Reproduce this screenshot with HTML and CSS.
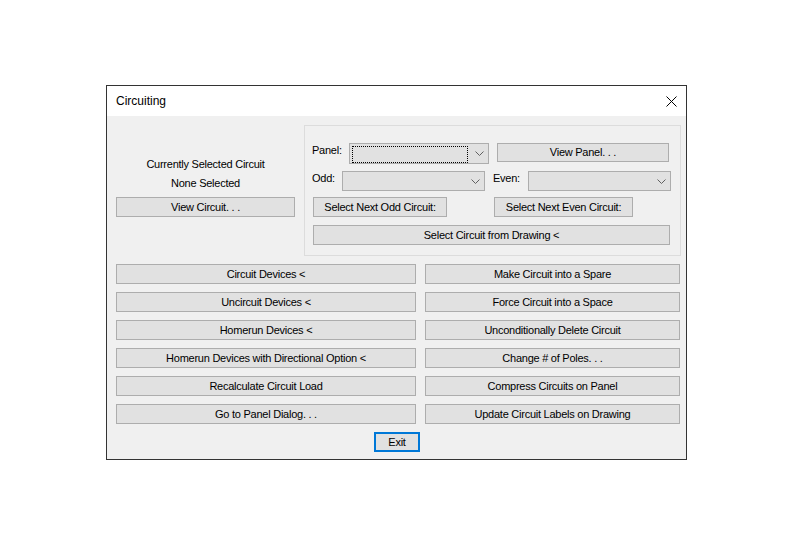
FILE: index.html
```html
<!DOCTYPE html>
<html>
<head>
<meta charset="utf-8">
<title>Circuiting</title>
<link rel="stylesheet" href="styles.css">
</head>
<body>
<div class="desktop">
  <div class="window">
    <div class="titlebar">
      <span class="title">Circuiting</span>
      <svg class="close" width="11" height="11" viewBox="0 0 11 11"><path d="M0.5 0.5 L10.5 10.5 M10.5 0.5 L0.5 10.5" stroke="#000" stroke-width="1" fill="none"/></svg>
    </div>
    <div class="content">
      <div class="top">
        <div class="current">
          <div class="line">Currently Selected Circuit</div>
          <div class="line">None Selected</div>
          <div class="btn view-circuit">View Circuit. . .</div>
        </div>
        <div class="group">
          <div class="row row1">
            <span class="lbl lbl-panel">Panel:</span>
            <div class="combo combo-panel">
              <span class="focus"></span>
              <svg class="chev" width="9" height="5" viewBox="0 0 9 5"><path d="M0.5 0.5 L4.5 4.5 L8.5 0.5" stroke="#606060" fill="none"/></svg>
            </div>
            <div class="btn view-panel">View Panel. . .</div>
          </div>
          <div class="row row2">
            <span class="lbl lbl-odd">Odd:</span>
            <div class="combo combo-odd">
              <svg class="chev" width="9" height="5" viewBox="0 0 9 5"><path d="M0.5 0.5 L4.5 4.5 L8.5 0.5" stroke="#606060" fill="none"/></svg>
            </div>
            <span class="lbl lbl-even">Even:</span>
            <div class="combo combo-even">
              <svg class="chev" width="9" height="5" viewBox="0 0 9 5"><path d="M0.5 0.5 L4.5 4.5 L8.5 0.5" stroke="#606060" fill="none"/></svg>
            </div>
          </div>
          <div class="row row3">
            <div class="btn next-odd">Select Next Odd Circuit:</div>
            <div class="btn next-even">Select Next Even Circuit:</div>
          </div>
          <div class="row row4">
            <div class="btn from-drawing">Select Circuit from Drawing &lt;</div>
          </div>
        </div>
      </div>
      <div class="actions">
        <div class="btn">Circuit Devices &lt;</div>
        <div class="btn">Make Circuit into a Spare</div>
        <div class="btn">Uncircuit Devices &lt;</div>
        <div class="btn">Force Circuit into a Space</div>
        <div class="btn">Homerun Devices &lt;</div>
        <div class="btn">Unconditionally Delete Circuit</div>
        <div class="btn">Homerun Devices with Directional Option &lt;</div>
        <div class="btn">Change # of Poles. . .</div>
        <div class="btn">Recalculate Circuit Load</div>
        <div class="btn">Compress Circuits on Panel</div>
        <div class="btn">Go to Panel Dialog. . .</div>
        <div class="btn">Update Circuit Labels on Drawing</div>
      </div>
      <div class="footer">
        <div class="btn exit">Exit</div>
      </div>
    </div>
  </div>
</div>
</body>
</html>
```
FILE: styles.css
```css
* { box-sizing: border-box; }
html, body { margin: 0; background: #ffffff; }
body {
  font-family: "Liberation Sans", Arial, sans-serif;
  font-size: 11px;
  letter-spacing: -0.25px;
  color: #000;
}
.desktop { padding: 85px 0 0 106px; }
.window {
  width: 581px;
  height: 375px;
  border: 1px solid #333333;
  background: #f0f0f0;
  display: flex;
  flex-direction: column;
}
.titlebar {
  flex: none;
  height: 30px;
  background: #ffffff;
  display: flex;
  align-items: center;
  justify-content: space-between;
  padding: 0 9px 0 9px;
}
.title {
  font-size: 12px;
  letter-spacing: 0;
}
.close { display: block; }
.content {
  flex: 1;
  padding: 9px 6px 7px 9px;
  display: flex;
  flex-direction: column;
}
.top {
  display: flex;
  gap: 9px;
  height: 131px;
}
.current {
  width: 179px;
  flex: none;
  padding-top: 30px;
  text-align: center;
}
.line { line-height: 19px; height: 19px; }
.btn {
  height: 20px;
  line-height: 18px;
  border: 1px solid #adadad;
  background: #e1e1e1;
  text-align: center;
  white-space: nowrap;
}
.view-circuit { margin-top: 4px; }
.group {
  flex: none;
  width: 377px;
  height: 131px;
  border: 1px solid #dcdcdc;
  padding: 17px 0 0 7px;
}
.row { display: flex; align-items: flex-start; }
.lbl { line-height: 14px; flex: none; }
.row1 { height: 21px; }
.row2 { height: 21px; margin-top: 7px; }
.row3 { margin-top: 5px; padding-left: 1px; }
.row4 { margin-top: 8px; padding-left: 1px; }
.lbl-panel { width: 37px; padding-top: 0; }
.lbl-odd { width: 30px; padding-top: 0; }
.lbl-even { width: 35px; padding-top: 0; margin-left: 8px; }
.combo {
  flex: none;
  height: 21px;
  border: 1px solid #adadad;
  background: #e1e1e1;
  display: flex;
  align-items: center;
  justify-content: flex-end;
  padding: 0 4px 0 2px;
}
.combo-panel { width: 140px; }
.combo-odd { width: 143px; height: 20px; }
.combo-even { width: 143px; height: 20px; }
.focus {
  width: 116px;
  height: 17px;
  border: 1px dotted #000;
  margin-right: auto;
  margin-top: 1px;
}
.chev { display: block; flex: none; }
.view-panel { width: 172px; margin-left: 8px; height: 19px; line-height: 17px; }
.next-odd { width: 134px; }
.next-even { width: 139px; margin-left: 47px; }
.from-drawing { width: 357px; }
.actions {
  margin-top: 8px;
  display: grid;
  grid-template-columns: 300px 255px;
  column-gap: 9px;
  row-gap: 8px;
}
.footer {
  margin-top: 8px;
  display: flex;
  justify-content: center;
  padding-right: 3px;
}
.exit {
  width: 46px;
  border: 2px solid #0078d7;
  line-height: 16px;
  padding-left: 1px;
}
```
